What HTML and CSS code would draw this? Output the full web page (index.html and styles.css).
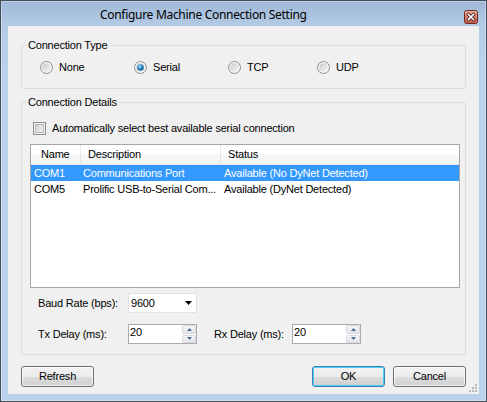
FILE: index.html
```html
<!DOCTYPE html>
<html>
<head>
<meta charset="utf-8">
<link rel="stylesheet" href="styles.css">
</head>
<body>
<div class="window">
  <div class="titlebar">
    <span class="title">Configure Machine Connection Setting</span>
    <svg class="close" width="14" height="14" viewBox="0 0 14 14">
      <defs>
        <linearGradient id="cg" x1="0" y1="0" x2="0" y2="1">
          <stop offset="0" stop-color="#eab2a6"/>
          <stop offset="0.5" stop-color="#d8806f"/>
          <stop offset="1" stop-color="#c65a44"/>
        </linearGradient>
      </defs>
      <rect x="0.5" y="0.5" width="13" height="13" rx="2" fill="url(#cg)" stroke="#6e2b22"/>
      <path d="M4.5 4.5 L9.5 9.5 M9.5 4.5 L4.5 9.5" stroke="#4a2019" stroke-width="3.2" stroke-linecap="square"/>
      <path d="M4.5 4.5 L9.5 9.5 M9.5 4.5 L4.5 9.5" stroke="#ffffff" stroke-width="1.6" stroke-linecap="square"/>
    </svg>
  </div>
  <div class="client">
    <div class="group group-type">
      <div class="legend">Connection Type</div>
      <div class="radios">
        <div class="radio w94">
          <svg width="13" height="13" viewBox="0 0 13 13">
            <defs>
              <linearGradient id="rg" x1="0" y1="0" x2="1" y2="1">
                <stop offset="0" stop-color="#c9c9c9"/>
                <stop offset="1" stop-color="#f7f7f7"/>
              </linearGradient>
              <radialGradient id="dot" cx="0.4" cy="0.35" r="0.75">
                <stop offset="0" stop-color="#b6e6ff"/>
                <stop offset="0.45" stop-color="#2f8fd0"/>
                <stop offset="1" stop-color="#0d4675"/>
              </radialGradient>
            </defs>
            <circle cx="6.5" cy="6.5" r="6" fill="#f3f3f3" stroke="#8e8f8f"/>
            <circle cx="6.5" cy="6.5" r="4.3" fill="url(#rg)"/>
          </svg>
          <span>None</span>
        </div>
        <div class="radio w94">
          <svg width="13" height="13" viewBox="0 0 13 13">
            <circle cx="6.5" cy="6.5" r="6" fill="#f3f3f3" stroke="#8e8f8f"/>
            <circle cx="6.5" cy="6.5" r="4.3" fill="url(#rg)"/>
            <circle cx="6.5" cy="6.5" r="3.3" fill="url(#dot)"/>
          </svg>
          <span>Serial</span>
        </div>
        <div class="radio w89">
          <svg width="13" height="13" viewBox="0 0 13 13">
            <circle cx="6.5" cy="6.5" r="6" fill="#f3f3f3" stroke="#8e8f8f"/>
            <circle cx="6.5" cy="6.5" r="4.3" fill="url(#rg)"/>
          </svg>
          <span>TCP</span>
        </div>
        <div class="radio">
          <svg width="13" height="13" viewBox="0 0 13 13">
            <circle cx="6.5" cy="6.5" r="6" fill="#f3f3f3" stroke="#8e8f8f"/>
            <circle cx="6.5" cy="6.5" r="4.3" fill="url(#rg)"/>
          </svg>
          <span>UDP</span>
        </div>
      </div>
    </div>

    <div class="group group-details">
      <div class="legend">Connection Details</div>
      <div class="check">
        <svg width="13" height="13" viewBox="0 0 13 13">
          <defs>
            <linearGradient id="cbg" x1="0" y1="0" x2="1" y2="1">
              <stop offset="0" stop-color="#cfd1d4"/>
              <stop offset="1" stop-color="#f4f4f4"/>
            </linearGradient>
          </defs>
          <rect x="0.5" y="0.5" width="12" height="12" fill="#f4f4f4" stroke="#8e8f8f"/>
          <rect x="2.5" y="2.5" width="8" height="8" fill="url(#cbg)" stroke="#b4b7bb"/>
        </svg>
        <span>Automatically select best available serial connection</span>
      </div>

      <div class="listview">
        <div class="lv-header">
          <div class="hc c1">Name</div>
          <div class="hc c2">Description</div>
          <div class="hc c3">Status</div>
        </div>
        <div class="lv-row selected">
          <div class="rc c1">COM1</div>
          <div class="rc c2">Communications Port</div>
          <div class="rc c3">Available (No DyNet Detected)</div>
        </div>
        <div class="lv-row">
          <div class="rc c1">COM5</div>
          <div class="rc c2">Prolific USB-to-Serial Com...</div>
          <div class="rc c3">Available (DyNet Detected)</div>
        </div>
      </div>

      <div class="form-row baud-row">
        <span class="lbl lbl-left">Baud Rate (bps):</span>
        <div class="combo">
          <span>9600</span>
          <svg width="7" height="4" viewBox="0 0 7 4"><path d="M0 0 H7 L3.5 4 Z" fill="#000"/></svg>
        </div>
      </div>

      <div class="form-row delay-row">
        <span class="lbl lbl-left">Tx Delay (ms):</span>
        <div class="numeric">
          <span class="num-text">20</span>
          <div class="spin">
            <div class="spin-btn"><svg width="5" height="3" viewBox="0 0 5 3"><path d="M0 3 L2.5 0 L5 3 Z" fill="#4e6a8f"/></svg></div>
            <div class="spin-btn"><svg width="5" height="3" viewBox="0 0 5 3"><path d="M0 0 L2.5 3 L5 0 Z" fill="#4e6a8f"/></svg></div>
          </div>
        </div>
        <span class="lbl lbl-rx">Rx Delay (ms):</span>
        <div class="numeric">
          <span class="num-text">20</span>
          <div class="spin">
            <div class="spin-btn"><svg width="5" height="3" viewBox="0 0 5 3"><path d="M0 3 L2.5 0 L5 3 Z" fill="#4e6a8f"/></svg></div>
            <div class="spin-btn"><svg width="5" height="3" viewBox="0 0 5 3"><path d="M0 0 L2.5 3 L5 0 Z" fill="#4e6a8f"/></svg></div>
          </div>
        </div>
      </div>
    </div>

    <div class="buttons">
      <button class="btn">Refresh</button>
      <button class="btn btn-ok">OK</button>
      <button class="btn btn-cancel">Cancel</button>
    </div>

    <svg class="grip" width="9" height="9" viewBox="0 0 9 9">
      <g fill="#b8b8b8">
        <rect x="7" y="1" width="2" height="2"/>
        <rect x="4" y="4" width="2" height="2"/>
        <rect x="7" y="4" width="2" height="2"/>
        <rect x="1" y="7" width="2" height="2"/>
        <rect x="4" y="7" width="2" height="2"/>
        <rect x="7" y="7" width="2" height="2"/>
      </g>
    </svg>
  </div>
</div>
</body>
</html>
```

FILE: styles.css
```css
html, body {
  margin: 0;
  padding: 0;
  background: #ffffff;
}

body {
  font-family: "Liberation Sans", Arial, sans-serif;
  font-size: 11px;
  letter-spacing: -0.2px;
  color: #000;
}

.window {
  width: 487px;
  height: 402px;
  box-sizing: border-box;
  border: 1px solid #424d5a;
  background: linear-gradient(#9fb8d7 0px, #b4cbe5 25px, #b9d1ea 60px, #b9d1ea 100%);
  box-shadow: inset 0 0 0 1px rgba(255, 255, 255, 0.35);
  padding: 0 7px 7px 7px;
  display: flex;
  flex-direction: column;
}

.titlebar {
  height: 25px;
  display: flex;
  align-items: flex-start;
}

.title {
  font-family: "Noto Sans", "Open Sans", sans-serif;
  font-size: 12px;
  letter-spacing: -0.3px;
  line-height: 16px;
  margin-top: 6px;
  padding-left: 92px;
  color: #000;
}

.close {
  margin-left: auto;
  margin-right: 1px;
  margin-top: 9px;
  display: block;
}

.client {
  position: relative;
  height: 368px;
  box-sizing: border-box;
  background: #f0f0f0;
  padding: 19px 13px 0 13px;
}

.group {
  border: 1px solid #d5dfe5;
  border-radius: 3px;
}

.legend {
  display: table;
  margin: -7px 0 0 5px;
  padding: 0 1px;
  background: #f0f0f0;
  line-height: 13px;
}

.group-type {
  padding-bottom: 14px;
}

.radios {
  display: flex;
  margin-top: 9px;
  padding-left: 18px;
  height: 13px;
}

.radio {
  display: flex;
  align-items: center;
  gap: 6px;
  line-height: 13px;
}

.radio svg,
.check svg {
  display: block;
  flex: none;
}

.w94 { width: 94px; }
.w89 { width: 89px; }

.group-details {
  margin-top: 13px;
  padding-bottom: 10px;
}

.check {
  display: flex;
  align-items: center;
  gap: 6px;
  margin-top: 13px;
  padding-left: 11px;
  height: 13px;
  line-height: 13px;
}

.listview {
  margin: 9px 0 0 8px;
  width: 430px;
  height: 144px;
  box-sizing: border-box;
  border: 1px solid #a6a6a6;
  background: #ffffff;
  overflow: hidden;
}

.lv-header {
  display: flex;
  height: 20px;
  box-sizing: border-box;
  border-bottom: 1px solid #e5e5e5;
  background: linear-gradient(#ffffff 0, #ffffff 50%, #f7f8f9 50%, #f3f4f5 100%);
}

.hc {
  line-height: 19px;
  white-space: nowrap;
  box-sizing: border-box;
}

.c1 { width: 50px; flex: none; }
.c2 { width: 140px; flex: none; }
.c3 { flex: 1; }

.hc.c1 { padding-left: 10px; border-right: 1px solid #e5e5e5; }
.hc.c2 { padding-left: 7px; border-right: 1px solid #e5e5e5; }
.hc.c3 { padding-left: 7px; }

.lv-row {
  display: flex;
  height: 16px;
  line-height: 16px;
}

.lv-row.selected {
  background: #3399ff;
  color: #ffffff;
}

.rc {
  white-space: nowrap;
  overflow: hidden;
  box-sizing: border-box;
}

.rc.c1 { padding-left: 3px; }
.rc.c2 { padding-left: 2px; }
.rc.c3 { padding-left: 3px; }

.form-row {
  display: flex;
  align-items: center;
  height: 20px;
}

.baud-row {
  margin-top: 5px;
}

.delay-row {
  margin-top: 11px;
}

.lbl {
  white-space: nowrap;
  box-sizing: border-box;
}

.lbl-left {
  width: 106px;
  padding-left: 16px;
}

.lbl-rx {
  width: 78px;
  margin-left: 17px;
}

.combo {
  width: 69px;
  height: 20px;
  box-sizing: border-box;
  border: 1px solid #e2e2e2;
  background: #ffffff;
  display: flex;
  align-items: center;
  padding: 0 4px 0 2px;
  justify-content: space-between;
}

.combo svg {
  display: block;
  margin-right: 0;
}

.numeric {
  width: 69px;
  height: 20px;
  box-sizing: border-box;
  border: 1px solid #a9abb0;
  background: #ffffff;
  display: flex;
  align-items: flex-start;
}

.num-text {
  padding: 1px 0 0 1px;
  line-height: 13px;
  flex: 1;
}

.spin {
  width: 14px;
  height: 18px;
  display: flex;
  flex-direction: column;
  gap: 1px;
  margin-right: 0;
}

.spin-btn {
  flex: 1;
  box-sizing: border-box;
  border: 1px solid #d6d9de;
  border-radius: 2px;
  background: linear-gradient(#f5f5f5, #e3e5e8);
  display: flex;
  align-items: center;
  justify-content: center;
}

.spin-btn svg {
  display: block;
}

.buttons {
  display: flex;
  margin-top: 11px;
}

.btn {
  width: 73px;
  height: 21px;
  box-sizing: border-box;
  border: 1px solid #707070;
  border-radius: 3px;
  background: linear-gradient(#f2f2f2 0, #ebebeb 50%, #dddddd 50%, #cfcfcf 100%);
  font-family: "Liberation Sans", Arial, sans-serif;
  font-size: 11px;
  letter-spacing: -0.2px;
  color: #000;
  padding: 0;
  line-height: 19px;
  box-shadow: inset 0 0 0 1px rgba(255, 255, 255, 0.7);
}

.btn-ok {
  margin-left: auto;
  border-color: #3c7fb1;
  box-shadow: inset 0 0 0 1px #48d0f5;
}

.btn-cancel {
  margin-left: 8px;
}

.grip {
  position: absolute;
  right: 2px;
  bottom: 2px;
  display: block;
}
```
